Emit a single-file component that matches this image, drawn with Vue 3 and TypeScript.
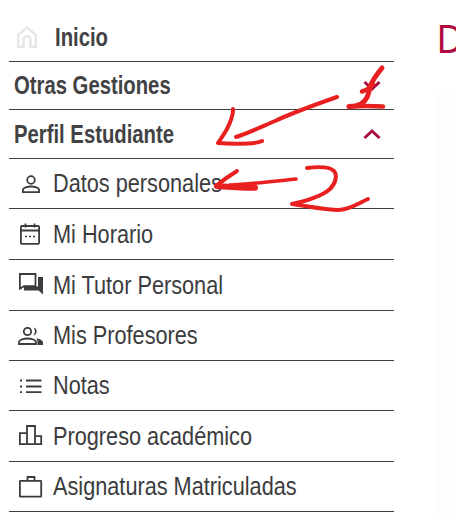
<script setup lang="ts">
interface Item { label: string; icon: string; height: number }
const items: Item[] = [
  { label: 'Datos personales', icon: 'person', height: 50 },
  { label: 'Mi Horario', icon: 'calendar', height: 51 },
  { label: 'Mi Tutor Personal', icon: 'chat', height: 51 },
  { label: 'Mis Profesores', icon: 'people', height: 50 },
  { label: 'Notas', icon: 'list', height: 50 },
  { label: 'Progreso académico', icon: 'bars', height: 51 },
  { label: 'Asignaturas Matriculadas', icon: 'case', height: 50 },
]
</script>

<template>
  <div class="page">
    <nav class="menu">
      <a class="row home">
        <svg class="home-icon" viewBox="0 0 24 24" width="24" height="24" fill="none" stroke="#e6e6e9" stroke-width="2.400">
          <path d="M3.200 21.800V9.800L12 2.500l8.800 7.300v12h-5.300v-7a3.500 3.500 0 0 0-7 0v7z" />
        </svg>
        <span class="title">Inicio</span>
      </a>
      <a class="row section s1"><span class="title">Otras Gestiones</span>
        <svg class="chev" viewBox="0 0 18 12" width="18" height="12"><path d="M1.500 2l7.500 7 7.500-7" /></svg>
      </a>
      <a class="row section s2"><span class="title">Perfil Estudiante</span>
        <svg class="chev" viewBox="0 0 18 12" width="18" height="12"><path d="M1.500 10l7.500-7 7.500 7" /></svg>
      </a>
      <a v-for="it in items" :key="it.label" class="row item" :style="{ height: it.height + 'px' }">
        <span class="icon">
          <svg viewBox="0 0 24 24" width="24" height="24" fill="none" stroke="#3c3c3e" stroke-width="1.800">
            <template v-if="it.icon === 'person'">
              <circle cx="13" cy="8" r="3.800" />
              <path d="M4.900 20.100v-2c0-2.300 4.600-3.600 8.100-3.600s8.100 1.300 8.100 3.600v2z" />
            </template>
            <template v-else-if="it.icon === 'calendar'">
              <rect x="2.900" y="4" width="18.200" height="17.800" rx="1" />
              <path d="M2.900 8.500h18.200M7.500 1.500v4M16.500 1.500v4" />
              <path d="M7 14.500h2M11 14.500h2M15 14.500h2" stroke-width="1.700" />
            </template>
            <template v-else-if="it.icon === 'chat'">
              <path d="M1.900 1h15.600v12.200H6l-4.100 2.500z" stroke-width="1.800" />
              <path d="M20 4h5v17.500l-4.500-4H6v-4h14z" fill="#3c3c3e" stroke="none" />
            </template>
            <template v-else-if="it.icon === 'people'">
              <circle cx="9.500" cy="7.500" r="3.700" />
              <path d="M15.500 3.600a4 4 0 0 1 0 7.800c1-1 1.300-2.500 1.300-3.900s-.3-2.900-1.300-3.900z" fill="#3c3c3e" stroke="none" />
              <path d="M1 20v-1.800c0-2.300 4.500-3.700 8.500-3.700s8.500 1.400 8.500 3.700V20z" />
              <path d="M18.500 14.300c3 .6 6.500 2.200 6.500 4.300V20.900h-5.500v-2.700c0-1.300-.4-2.800-1-3.900z" fill="#3c3c3e" stroke="none" />
            </template>
            <template v-else-if="it.icon === 'list'">
              <path d="M8 6.500h15.500M8 12.500h15.500M8 18.200h15.500" />
              <path d="M2 6.500h2M2 12.500h2M2 18.200h2" />
            </template>
            <template v-else-if="it.icon === 'bars'">
              <path d="M1.900 20.100v-11h7.100v11zM9 20.100V2h8v18.100zM17 20.100v-8h6.200v8zM1.900 20.100h21.300" />
            </template>
            <template v-else>
              <rect x="1.900" y="5.900" width="21.300" height="15.800" rx=".5" />
              <path d="M9.500 5.900V2h7v3.900" />
            </template>
          </svg>
        </span>
        <span class="label">{{ it.label }}</span>
      </a>
    </nav>
    <main class="content">
      <h1 class="heading">D</h1>
      <div class="panel"></div>
    </main>

    <svg class="scribble" viewBox="0 0 456 518" width="456" height="518" fill="none" stroke="#e8201f" stroke-linecap="round" stroke-linejoin="round">
      <path stroke-width="4.500" d="M349 106.500c8-.5 24-.6 34 0" />
      <path stroke-width="5" d="M382 68c-5 6-10 13-12 19-1.500 7-2.500 13-9 17-4 2-8 2.500-12 2.500" />
      <path stroke-width="4.500" d="M362 91.500c4-1 8-4 11-7" />
      <path stroke-width="4" d="M337 97c-20 7-45 16-62 24-14 6-29 13-39 16" />
      <path stroke-width="4" d="M233 109c.5 7-3 14-6 20-3 5-6 10-9 14 10 1 20 1 30 .5 6-.3 11-1 14-2.500" />
      <path stroke-width="4" d="M237 171c-8 5-15 10-21 15" />
      <path stroke-width="6" d="M217 186c12 .8 26 2 38 1.800" />
      <path stroke-width="3.500" d="M230 185c20-1 46-4 66-6" />
      <path stroke-width="4" d="M307 168c8-1 22-2 27 3 3.500 4 2 12-4 18-8 7-24 12-38 15 15 2 32 6 47 6 12-1 20-7 29-11" />
    </svg>
  </div>
</template>

<style>
html, body { margin: 0; background: #fff; }
</style>

<style scoped>
.page {
  position: relative;
  width: 456px;
  height: 518px;
  overflow: hidden;
  display: flex;
  font-family: "Liberation Sans", sans-serif;
  color: #3c3c3e;
}
.menu {
  flex: none;
  width: 385px;
  margin-left: 9px;
  padding-top: 13px;
  display: flex;
  flex-direction: column;
}
.row {
  display: flex;
  align-items: center;
  box-sizing: border-box;
  border-bottom: 1.5px solid #3f3f41;
}
.home { height: 49px; padding-left: 6px; }
.home-icon { margin-right: 16px; flex: none; }
.title {
  display: inline-block;
  font-size: 26px;
  font-weight: 700;
  color: #424244;
  transform: scaleX(0.78);
  transform-origin: left center;
}
.section { justify-content: space-between; padding-left: 5px; padding-right: 13px; }
.s1 { height: 48px; }
.s2 { height: 49px; }
.chev { flex: none; fill: none; stroke: #a90b45; stroke-width: 3; }
.item { padding-left: 9px; }
.icon { display: flex; width: 35px; flex: none; }
.icon svg { overflow: visible; }
.label {
  display: inline-block;
  font-size: 25px;
  white-space: nowrap;
  transform: scaleX(0.868);
  transform-origin: left center;
}
.content {
  flex: none;
  width: 100px;
  margin-left: 43px;
  display: flex;
  flex-direction: column;
}
.heading {
  margin: 19px 0 0;
  font-size: 40px;
  font-weight: 400;
  line-height: 40px;
  color: #b00b40;
  transform: scaleX(0.9);
  transform-origin: left center;
}
.panel { flex: 1; margin-top: 31px; background: #fdfdfd; }
.scribble { position: absolute; left: 0; top: 0; pointer-events: none; }
</style>
